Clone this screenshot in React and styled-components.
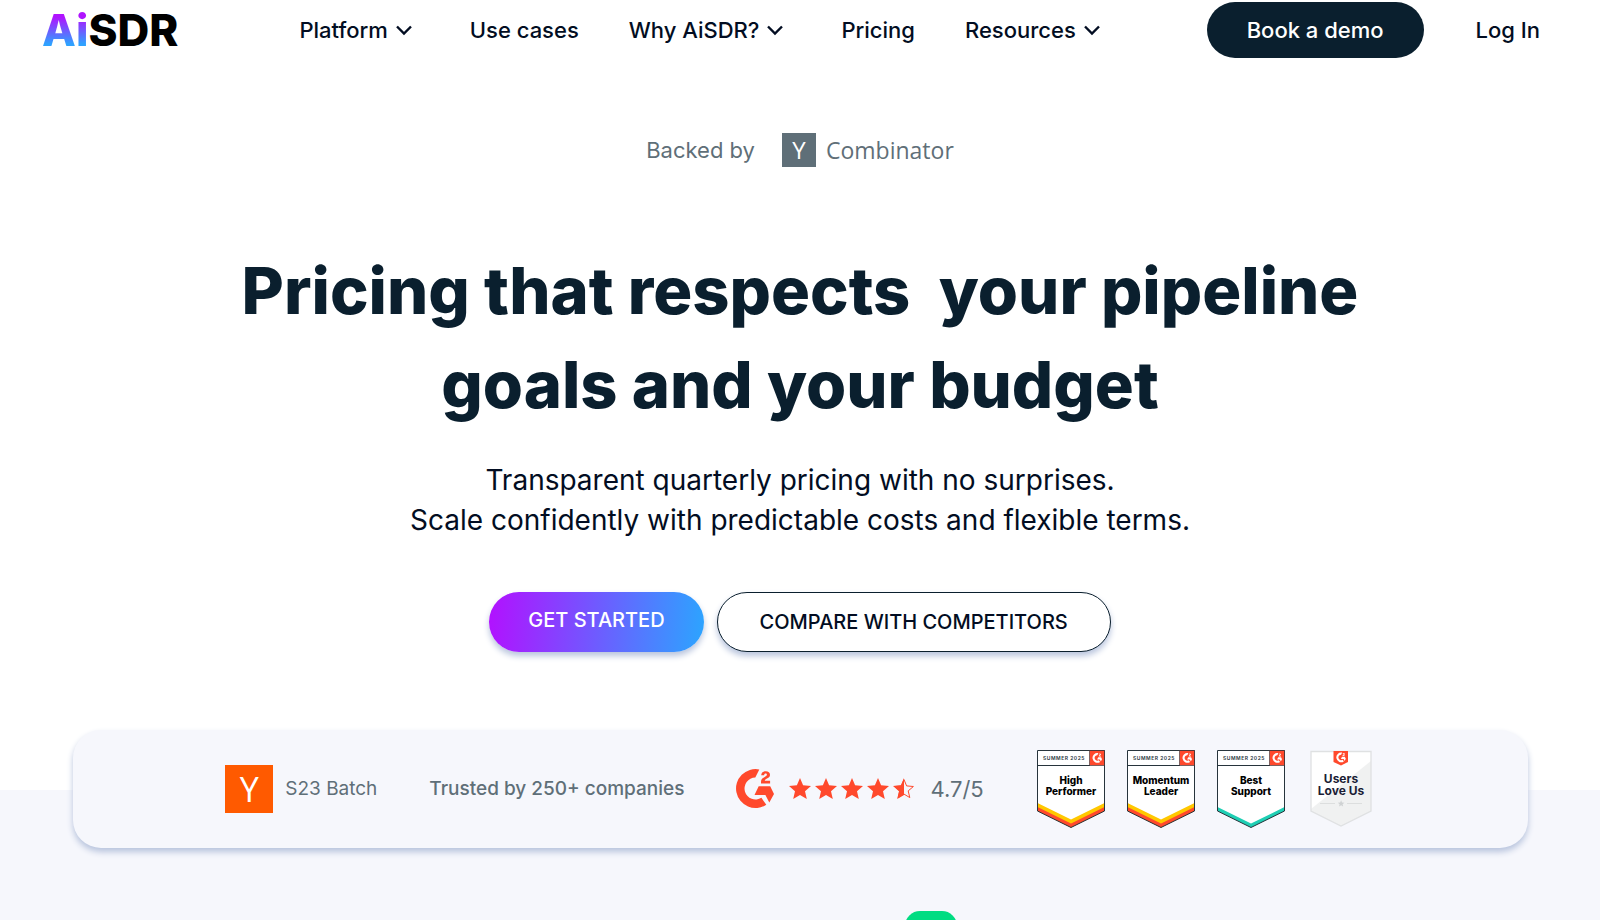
import React from "react"
import styled, { createGlobalStyle } from "styled-components"

const colors = {
  navy: "#0a1f2e",
  ink: "#020d22",
  slate: "#5f6f78",
  mist: "#f6f7fc",
  orange: "#ff5a00",
  g2: "#ff492c",
  green: "#00dc82",
  shadow: "#b8c4dd",
}

const GlobalStyle = createGlobalStyle`
  * {
    box-sizing: border-box;
  }

  body {
    background: #fff;
    color: ${colors.ink};
    font-family: Inter, "Liberation Sans", sans-serif;
    margin: 0;
  }
`

const Page = styled.div`
  display: flex;
  flex-direction: column;
  height: 100vh;
  overflow: hidden;
`

const Header = styled.header`
  align-items: center;
  display: flex;
  flex-shrink: 0;
  height: 60px;
  padding: 0 60px 0 42px;
`

const Logo = styled.a`
  color: #000;
  font-size: 44px;
  font-weight: 800;
  line-height: 60px;
  text-decoration: none;
`

const LogoAccent = styled.span`
  background: linear-gradient(180deg, #b013ff 26%, #2ea2ff 76%);
  background-clip: text;
  color: transparent;
`

const Nav = styled.nav`
  display: flex;
  gap: 50px;
  margin-left: 121px;
`

const NavLink = styled.a`
  align-items: center;
  color: ${colors.ink};
  display: flex;
  font-size: 22px;
  font-weight: 500;
  gap: 8px;
  line-height: 32px;
  text-decoration: none;
  white-space: nowrap;
`

const ChevronIcon = styled.svg`
  height: 16px;
  margin-right: 8px;
  width: 16px;
`

const Actions = styled.div`
  align-items: center;
  display: flex;
  gap: 52px;
  margin-left: auto;
`

const DemoButton = styled.button`
  background: ${colors.navy};
  border: 0;
  border-radius: 28px;
  color: #fff;
  font: 500 22px/32px Inter, sans-serif;
  padding: 12px 40px;
  white-space: nowrap;
`

const Hero = styled.main`
  align-items: center;
  display: flex;
  flex-direction: column;
  flex-shrink: 0;
  padding: 70px 40px 78px;
  text-align: center;
`

const Backed = styled.div`
  align-items: center;
  color: ${colors.slate};
  display: flex;
  font-size: 22px;
  gap: 27px;
  line-height: 40px;
`

const Combinator = styled.span`
  align-items: center;
  display: flex;
  font-family: "Open Sans", sans-serif;
  font-size: 23px;
  gap: 10px;
`

const YMark = styled.span`
  background: ${(props) => props.$color};
  color: #fff;
  font-family: "Open Sans", sans-serif;
  font-size: ${(props) => (props.$large ? 34 : 24)}px;
  height: ${(props) => (props.$large ? 48 : 34)}px;
  line-height: ${(props) => (props.$large ? 48 : 34)}px;
  text-align: center;
  width: ${(props) => (props.$large ? 48 : 34)}px;
`

const Title = styled.h1`
  color: ${colors.navy};
  font-size: 65px;
  font-weight: 800;
  line-height: 94px;
  margin: 74px 0 0;
  white-space: pre-wrap;
`

const Lead = styled.p`
  font-size: 28px;
  line-height: 40px;
  margin: 28px 0 0;
`

const Buttons = styled.div`
  display: flex;
  gap: 13px;
  margin-top: 52px;
`

const PillButton = styled.button`
  background: ${(props) =>
    props.$primary ? "linear-gradient(95deg, #b013ff 2%, #2ea2ff 98%)" : "#fff"};
  border: ${(props) => (props.$primary ? "0" : `1px solid ${colors.navy}`)};
  border-radius: 30px;
  box-shadow: 0 4px 6px ${colors.shadow};
  color: ${(props) => (props.$primary ? "#fff" : colors.ink)};
  font: 500 20px/32px Inter, sans-serif;
  height: 60px;
  padding: ${(props) => (props.$primary ? "0 39px 4px" : "0 42px")};
  white-space: nowrap;
`

const Proof = styled.section`
  background: linear-gradient(180deg, #fff 60px, ${colors.mist} 60px);
  flex-shrink: 0;
  padding: 0 72px 12px 73px;
`

const ProofCard = styled.div`
  align-items: center;
  background: ${colors.mist};
  border-radius: 28px;
  box-shadow: 0 4px 6px ${colors.shadow};
  color: ${colors.slate};
  display: flex;
  font-size: 19px;
  gap: 52px;
  height: 118px;
  justify-content: center;
  line-height: 28px;
  white-space: nowrap;
`

const Batch = styled.div`
  align-items: center;
  display: flex;
  gap: 12px;
`

const Trusted = styled.span`
  font-weight: 500;
`

const Rating = styled.div`
  align-items: center;
  display: flex;
  font-size: 22px;
  gap: 14px;
`

const Stars = styled.div`
  display: flex;
  gap: 2px;
`

const Badges = styled.div`
  align-items: center;
  display: flex;
  gap: 20px;
`

const Plans = styled.section`
  background: ${colors.mist};
  display: flex;
  flex: 1;
  justify-content: center;
  padding: 51px 0 0 262px;
`

const PlanTag = styled.span`
  background: ${colors.green};
  border-radius: 15px;
  flex-shrink: 0;
  height: 30px;
  width: 52px;
`

const Chevron = () => (
  <ChevronIcon viewBox="0 0 16 16" fill="none" aria-hidden="true">
    <path d="M1 4.5 8 11.5 15 4.5" stroke={colors.ink} strokeWidth="2.4" />
  </ChevronIcon>
)

const G2Shape = ({ fill }) => (
  <g fill={fill}>
    <path d="M25.4 28.8A11 11 0 1 1 19.3 8.5L23.3 0.4A19.5 19.5 0 1 0 30.3 35.8Z" />
    <path d="M22.7 17.3H34.2L38 25 33.3 33.6 29.4 26H18.5Z" />
    <path d="M25.2 6.2C25.4 3.7 27.1 2.2 29.8 2.2 32.4 2.2 34 3.5 34 5.7 34 7.4 33.2 8.4 31 9.6 29.6 10.4 28.9 11 28.7 11.8H34.1V14.4H25V13C25 10.5 26.1 9.2 28.7 7.9 30.3 7.1 30.9 6.6 30.9 5.8 30.9 5 30.4 4.6 29.6 4.6 28.7 4.6 28.2 5.2 28.1 6.2Z" />
  </g>
)

const G2Logo = () => (
  <svg width="38" height="40" viewBox="0 0 38 40" role="img" aria-label="G2">
    <G2Shape fill={colors.g2} />
  </svg>
)

const starPath =
  "M12 1 15.1 8.3 23 9 17 14.2 18.8 22 12 17.9 5.2 22 7 14.2 1 9 8.9 8.3Z"

const Star = ({ half }) => (
  <svg width="24" height="24" viewBox="0 0 24 24" aria-hidden="true">
    {half ? (
      <>
        <path
          d="M12 2.6 14.6 8.9 21.4 9.5 16.2 13.9 17.8 20.6 12 17.1 6.2 20.6 7.8 13.9 2.6 9.5 9.4 8.9Z"
          fill="none"
          stroke={colors.g2}
          strokeWidth="1"
        />
        <path d="M12 1V17.9L5.2 22 7 14.2 1 9 8.9 8.3Z" fill={colors.g2} />
      </>
    ) : (
      <path d={starPath} fill={colors.g2} />
    )}
  </svg>
)

const AwardBadge = ({ lines, bands }) => (
  <svg width="70" height="80" viewBox="0 0 70 80" role="img" aria-label={lines.join(" ")}>
    <path d="M1.5 1.5H68.5V62L35 78.5 1.5 62Z" fill="#fff" />
    {bands.map((band) => (
      <path key={band.y} d={`M1.5 ${band.y} 35 ${band.y + 16.5} 68.5 ${band.y}V62L35 78.5 1.5 62Z`} fill={band.color} />
    ))}
    <path d="M1.5 1.5H68.5V62L35 78.5 1.5 62Z" fill="none" stroke="#27343c" />
    <path d="M1.5 16.5H54" stroke="#27343c" />
    <path d="M53.5 1.5H68.5V16.5H53.5Z" fill={colors.g2} stroke="#27343c" strokeWidth="0.6" />
    <g transform="translate(56.5 4) scale(0.25)">
      <G2Shape fill="#fff" />
    </g>
    <text x="28" y="11" textAnchor="middle" fontSize="5" fontWeight="600" letterSpacing="0.5" fill="#27343c">
      SUMMER 2025
    </text>
    {lines.map((line, i) => (
      <text key={line} x="35" y={35 + i * 11} textAnchor="middle" fontSize="10" fontWeight="800" fill="#000">
        {line}
      </text>
    ))}
  </svg>
)

const UsersBadge = () => (
  <svg width="70" height="80" viewBox="0 0 70 80" role="img" aria-label="Users Love Us">
    <path d="M5 2.5H65V62L35 77 5 62Z" fill="#fff" />
    <path d="M65 12V62L35 77 5 62V60Z" fill="#f0f1f1" />
    <path d="M5 2.5H65V62L35 77 5 62Z" fill="none" stroke="#dfe1e2" strokeWidth="1.3" />
    <path d="M27.5 2H42V13L35 16.5 27.5 13Z" fill={colors.g2} />
    <g transform="translate(30.3 3.5) scale(0.25)">
      <G2Shape fill="#fff" />
    </g>
    <text x="35" y="34" textAnchor="middle" fontSize="12" fontWeight="700" fill="#1b1d35">
      Users
    </text>
    <text x="35" y="46" textAnchor="middle" fontSize="12" fontWeight="700" fill="#1b1d35">
      Love Us
    </text>
    <path d="M14 54.5H29M41 54.5H56" stroke="#dcdede" />
    <path d={starPath} transform="translate(31.5 51) scale(0.3)" fill="#cfd2d3" />
  </svg>
)

const warm = [
  { y: 54, color: "#ffc800" },
  { y: 58, color: colors.g2 },
]
const teal = [{ y: 58, color: "#1fcfb4" }]

const links = [
  { label: "Platform", menu: true },
  { label: "Use cases" },
  { label: "Why AiSDR?", menu: true },
  { label: "Pricing" },
  { label: "Resources", menu: true },
]

const App = () => (
  <Page>
    <GlobalStyle />
    <Header>
      <Logo href="#">
        <LogoAccent>Ai</LogoAccent>SDR
      </Logo>
      <Nav>
        {links.map((link) => (
          <NavLink key={link.label} href="#">
            {link.label}
            {link.menu && <Chevron />}
          </NavLink>
        ))}
      </Nav>
      <Actions>
        <DemoButton>Book a demo</DemoButton>
        <NavLink href="#">Log In</NavLink>
      </Actions>
    </Header>

    <Hero>
      <Backed>
        Backed by
        <Combinator>
          <YMark $color={colors.slate}>Y</YMark>
          Combinator
        </Combinator>
      </Backed>
      <Title>
        {"Pricing that respects  your pipeline"}
        <br />
        goals and your budget
      </Title>
      <Lead>
        Transparent quarterly pricing with no surprises.
        <br />
        Scale confidently with predictable costs and flexible terms.
      </Lead>
      <Buttons>
        <PillButton $primary>GET STARTED</PillButton>
        <PillButton>COMPARE WITH COMPETITORS</PillButton>
      </Buttons>
    </Hero>

    <Proof>
      <ProofCard>
        <Batch>
          <YMark $color={colors.orange} $large>Y</YMark>
          S23 Batch
        </Batch>
        <Trusted>Trusted by 250+ companies</Trusted>
        <Rating>
          <G2Logo />
          <Stars>
            <Star />
            <Star />
            <Star />
            <Star />
            <Star half />
          </Stars>
          4.7/5
        </Rating>
        <Badges>
          <AwardBadge lines={["High", "Performer"]} bands={warm} />
          <AwardBadge lines={["Momentum", "Leader"]} bands={warm} />
          <AwardBadge lines={["Best", "Support"]} bands={teal} />
          <UsersBadge />
        </Badges>
      </ProofCard>
    </Proof>

    <Plans>
      <PlanTag />
    </Plans>
  </Page>
)

export default App
